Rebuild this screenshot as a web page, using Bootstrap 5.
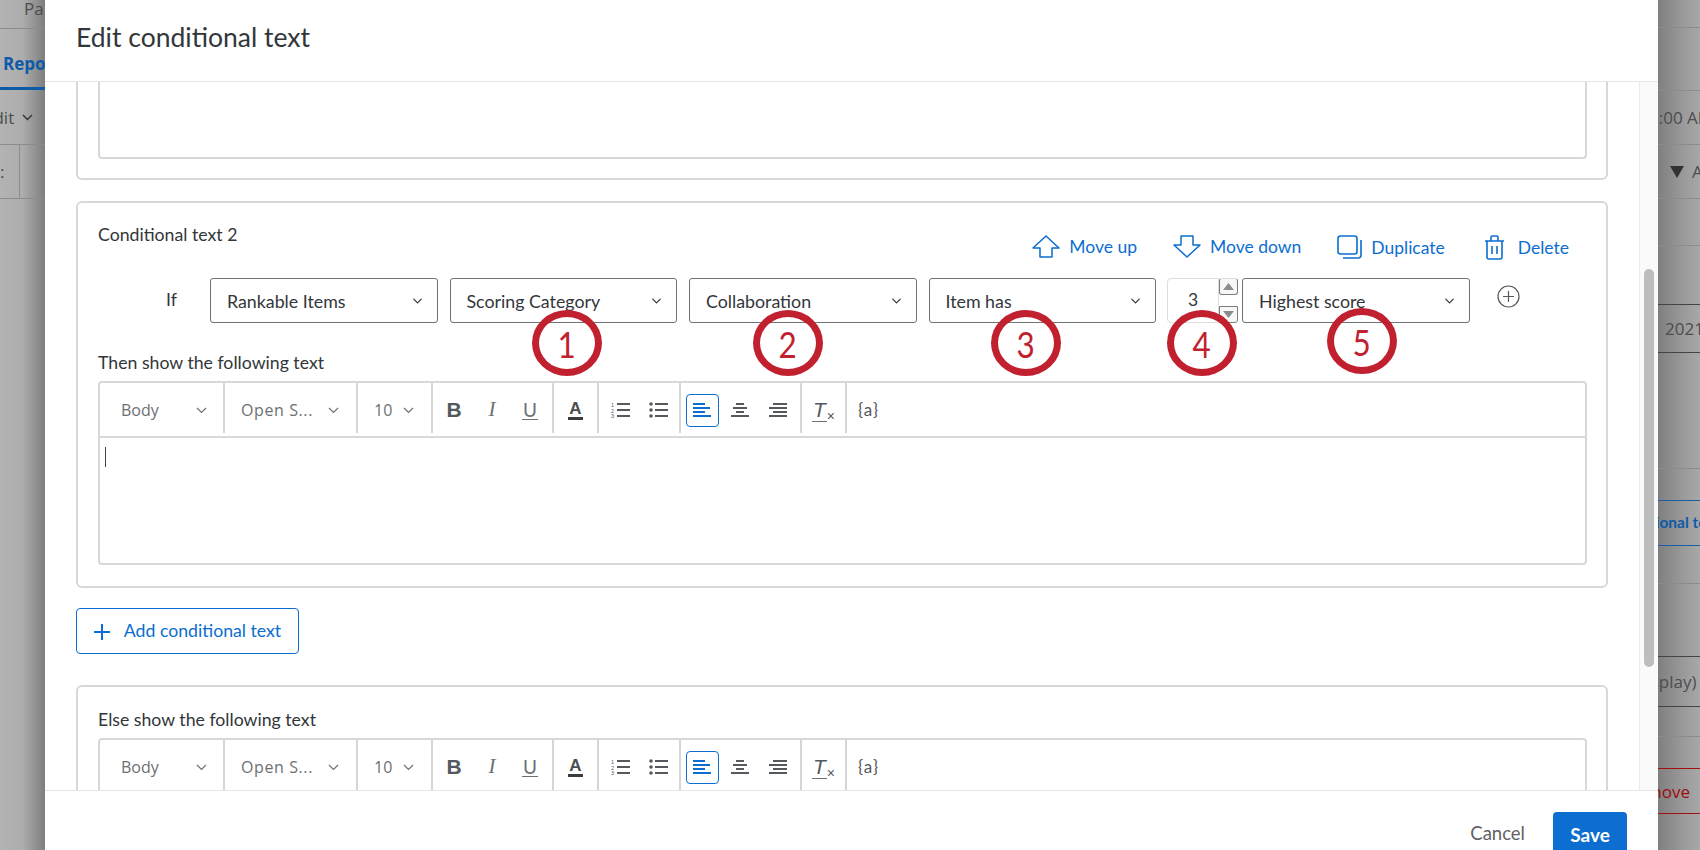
<!DOCTYPE html>
<html lang="en">
<head>
<meta charset="utf-8">
<title>Edit conditional text</title>
<link href="https://cdn.jsdelivr.net/npm/bootstrap@5.3.0/dist/css/bootstrap.min.css" rel="stylesheet">
<style>
html,body{height:850px;overflow:hidden;}
body{background:#a3a3a3;color:#32363a;font-family:"Lato","Liberation Sans",sans-serif;font-size:17.7px;position:relative;}
/* backdrop page */
.bg-wrap{height:850px;}
.bg-left,.bg-right{overflow:hidden;white-space:nowrap;color:#4b4d4f;font-family:"Open Sans",sans-serif;font-size:17px;}
.bg-left{width:45px;background:linear-gradient(90deg,#b3b3b3 0,#adadad 50%,#7e7e7e 100%);}
.bg-right{width:42px;background:linear-gradient(90deg,#7f7f7f 0,#9a9a9a 60%,#a8a8a8 100%);}
.bg-row{border-bottom:1px solid #8c8c8c;overflow:hidden;line-height:1;flex:none;}
.r-h28{height:29px;}.r-h58{height:61px;}.r-h54{height:55px;}.r-h53{height:54px;}.r-rest{flex:1;border:0;}
.bg-tab{color:#0d5ba8;font-weight:700;padding:10px 0 0 3px;border-bottom:3px solid #0d5ba8;font-size:17px;}
.bg-edit{margin-left:-16px;}
.bg-cellline{width:20px;height:100%;border-right:1px solid #8c8c8c;flex:none;}
.rr-1{height:28px;}.rr-2{height:63px;}.rr-3{height:54px;}.rr-5{height:47px;}.rr-6{height:59px;border-bottom-color:#444;}.rr-7{height:48px;border-bottom-color:#444;}
.rr-8{height:116px;}.rr-9{height:32px;border-bottom-color:#1a5da5;}.rr-10{height:45px;border-bottom-color:#1a5da5;color:#0d5ba8;font-weight:700;font-family:"Lato",sans-serif;font-size:15.500px;}
.rr-11{height:38px;}.rr-12{height:73px;border-bottom-color:#444;}.rr-13{height:50px;border-bottom-color:#444;}.rr-14{height:30px;}.rr-15{height:32px;border-bottom-color:#a01010;}.rr-16{height:45px;border-bottom-color:#a01010;color:#9c0d0d;}
.tx-clip{display:block;}
.tx-time{margin-left:-9px;}.tx-year{margin-left:7px;}.tx-cond{margin-left:-49px;}.tx-play{margin-left:-27px;}.tx-move{margin-left:-32px;}
.tri{width:0;height:0;border-left:7px solid transparent;border-right:7px solid transparent;border-top:12px solid #333;margin-left:12px;flex:none;}
/* modal */
.edit-modal{position:absolute;left:45px;top:0;width:1613px;height:850px;border:0;border-radius:0;box-shadow:none;background:#fff;}
.edit-head{height:82px;flex:none;padding:0 31px;border-bottom:1px solid #e6e6e6;border-radius:0;}
.edit-head .modal-title{font-size:26.5px;font-weight:400;color:#32363a;line-height:1;margin-top:-6px;}
.edit-main{min-height:0;padding:0;}
.scroll-col{flex:1;min-width:0;padding:0 31px;overflow:hidden;}
.scroll-track{width:19px;background:#fafafa;border-left:1px solid #ececec;padding:187px 0 0 4px;}
.scroll-thumb{width:10px;height:398px;background:#bdbdbd;border-radius:5px;}
.sect{border:2px solid #d8d8d8;border-radius:6px;padding:0 19px 0 20px;flex:none;}
.sect-1{height:98px;border-top:0;border-radius:0 0 6px 6px;margin-bottom:21px;}
.sect-2{height:387px;}
.sect-3{height:200px;padding-top:23px;margin-top:31px;}
.box-top{height:77px;border:2px solid #d8d8d8;border-top:0;border-radius:0 0 4px 4px;}
.sect-head{height:75px;}
.sect-title{font-size:17.7px;line-height:20px;padding-top:22px;}
.acts{padding:32px 18px 0 0;gap:36px;}
.act{color:#0b6ed0;font-size:17.5px;line-height:23px;gap:9px;text-decoration:none;}
.act-del{margin-left:3px;}
.cond-row{height:45px;gap:12px;}
.if-cell{width:100px;padding-left:68px;font-size:17.7px;}
select.cond-sel{width:227.5px;height:45px;flex:none;padding:1px 30px 0 16px;border:1px solid #6f7276;border-radius:3px;color:#32363a;font-family:"Lato",sans-serif;font-size:17.8px;background-position:right 13px center;background-size:13px 10px;}
.num-wrap{width:71px;height:45px;flex:none;margin:0 -8px 0 -1px;}
.num-inp{width:52px;height:45px;border:1px solid #ddd;border-radius:4px 0 0 4px;text-align:center;font-size:17.5px;color:#32363a;}
.spin{width:19px;height:17px;border:1px solid #7a7d80;border-top-color:#ddd;background:#f7f7f7;}
.spin-up{border-radius:3px;}
.spin-dn{border-radius:0 0 3px 3px;border-top:1px solid #7a7d80;}
.spin-gap{height:11px;}
.add-circ{margin-left:15px;margin-top:-8px;flex:none;}
.lab{font-size:17.7px;line-height:20px;margin:30px 0 8px;}
.lab-3{margin:0 0 8px;}
.editor{border:2px solid #d8d8d8;border-radius:4px;height:184px;flex:none;}
.tb{height:55px;border-bottom:2px solid #d8d8d8;}
.tg{height:50px;border-right:2px solid #d6d6d6;font-family:"Open Sans",sans-serif;font-size:16px;color:#6d7073;}
.tg-in{margin-top:5px;}
.g1{width:125px;padding:0 16px 0 21px;}
.g2{width:133px;padding:0 17px 0 16px;letter-spacing:.6px;}
.g3{width:75px;padding:0 17px 0 16px;}
.g4{width:121px;padding-left:2px;}
.g5{width:45px;}
.g6{width:82px;padding-left:2px;}
.g7{width:121px;padding-left:2px;}
.g8{width:45px;}
.g9{padding-left:11px;font-size:17px;letter-spacing:1.2px;color:#55585c;height:50px;}
.tg > *, .g9{position:relative;top:2px;}
.ic{width:38px;height:32px;}
.ic-b{font-family:"Liberation Sans",sans-serif;font-weight:700;font-size:21px;color:#55585c;}
.ic-i{font-family:"Liberation Serif",serif;font-style:italic;font-size:21px;color:#6d7073;}
.ic-u{font-family:"Lato",sans-serif;font-size:19px;color:#6d7073;}
.ic-u span{border-bottom:1.5px solid #6d7073;line-height:19px;display:block;padding:0 1px;}
.ic-a{font-family:"Liberation Sans",sans-serif;font-weight:700;font-size:17px;color:#4b4e51;}
.ic-a span{border-bottom:3px solid #3a3d40;line-height:17px;display:block;padding:0 1px;}
.ic-on{border:1.5px solid #0b6ed0;border-radius:4px;width:33px;height:33px;margin:0 2.5px;}
.tx-t{font-family:"Liberation Sans",sans-serif;font-style:italic;font-size:21px;color:#55585c;border-bottom:1.5px solid #6d7073;line-height:22px;display:block;padding:0 1px;}
.tx-x{font-family:"Liberation Sans",sans-serif;font-size:14px;color:#55585c;margin-top:11px;line-height:1;}
.caret-blink{width:1px;height:20px;background:#444;margin:9px 0 0 5px;}
.btn-add{width:223px;height:46px;padding:1px 0 0;margin-top:20px;flex:none;border:1px solid #0b6ed0;color:#0b6ed0;font-size:17.7px;gap:14px;border-radius:4px;background:#fff;}
.edit-foot{height:60px;flex:none;padding:21px 31px 0 0;border-top:1px solid #e6e6e6;align-items:flex-start;overflow:hidden;gap:28px;border-radius:0;flex-wrap:nowrap;}
.link-cancel{color:#5f6266;font-size:18.5px;margin:9px 0 0;line-height:24px;}
.btn-save{width:74px;height:46px;background:#0b6ed0;border:0;border-radius:4px;color:#fff;font-size:19px;font-weight:700;margin:0;padding:0;}
/* annotations */
.mark-c{position:absolute;width:70px;height:66px;border:7px solid #c1202f;border-radius:50%;color:#c1202f;font-family:"Lato",sans-serif;font-size:37px;line-height:1;}
.mark-c span{display:block;transform:scaleX(.85);}
.c1{left:532px;top:310px;}.c2{left:753px;top:310px;}.c3{left:991px;top:310px;}.c4{left:1167px;top:310px;}.c5{left:1327px;top:308px;}
</style>
</head>
<body>
<div class="bg-wrap d-flex justify-content-between">
  <div class="bg-left d-flex flex-column">
    <div class="bg-row r-h28 ps-4">Pa</div>
    <div class="bg-row r-h58 bg-tab d-flex align-items-center">Repo</div>
    <div class="bg-row r-h54 d-flex align-items-center gap-2"><span class="bg-edit">Edit</span>
      <svg width="11" height="7" viewBox="0 0 11 7"><path d="M1 1l4.500 4.500L10 1" fill="none" stroke="#333" stroke-width="1.400"/></svg></div>
    <div class="bg-row r-h53 d-flex align-items-center"><div class="bg-cellline d-flex align-items-center">:</div><span class="ms-4">1</span></div>
    <div class="r-rest"></div>
  </div>
  <div class="bg-right d-flex flex-column">
    <div class="bg-row rr-1"></div>
    <div class="bg-row rr-2"></div>
    <div class="bg-row rr-3 d-flex align-items-center"><span class="tx-clip tx-time">5:00 AM</span></div>
    <div class="bg-row rr-3 d-flex align-items-center"><div class="tri"></div><span class="ms-2">A</span></div>
    <div class="bg-row rr-5"></div>
    <div class="bg-row rr-6"></div>
    <div class="bg-row rr-7 d-flex align-items-center"><span class="tx-clip tx-year">2021</span></div>
    <div class="bg-row rr-8"></div>
    <div class="bg-row rr-9"></div>
    <div class="bg-row rr-10 d-flex align-items-center"><span class="tx-clip tx-cond">Conditional text</span></div>
    <div class="bg-row rr-11"></div>
    <div class="bg-row rr-12"></div>
    <div class="bg-row rr-13 d-flex align-items-center"><span class="tx-clip tx-play">(display)</span></div>
    <div class="bg-row rr-14"></div>
    <div class="bg-row rr-15"></div>
    <div class="bg-row rr-16 d-flex align-items-center"><span class="tx-clip tx-move">Remove</span></div>
    <div class="r-rest"></div>
  </div>
</div>

<div class="modal-content edit-modal d-flex flex-column">
  <div class="modal-header edit-head"><h5 class="modal-title">Edit conditional text</h5></div>
  <div class="modal-body edit-main d-flex flex-fill overflow-hidden">
    <div class="scroll-col d-flex flex-column">
      <div class="sect sect-1"><div class="box-top"></div></div>

      <div class="sect sect-2">
        <div class="sect-head d-flex justify-content-between">
          <div class="sect-title">Conditional text 2</div>
          <div class="acts d-flex align-items-start">
            <a class="act d-flex align-items-center" href="#"><svg width="28" height="23" viewBox="0 0 28 23"><path d="M14 1L27 13H20V22H8V13H1Z" fill="none" stroke="#0b6ed0" stroke-width="1.500" stroke-linejoin="round"/></svg>Move up</a>
            <a class="act d-flex align-items-center" href="#"><svg width="28" height="23" viewBox="0 0 28 23"><path d="M14 22L27 10H20V1H8V10H1Z" fill="none" stroke="#0b6ed0" stroke-width="1.500" stroke-linejoin="round"/></svg>Move down</a>
            <a class="act d-flex align-items-center" href="#"><svg width="25" height="24" viewBox="0 0 25 24"><rect x="1" y="1" width="19" height="18" rx="2.500" fill="none" stroke="#0b6ed0" stroke-width="1.600"/><path d="M24 5v15a3 3 0 0 1-3 3H6" fill="none" stroke="#0b6ed0" stroke-width="1.600"/></svg>Duplicate</a>
            <a class="act act-del d-flex align-items-center" href="#"><svg class="me-1" width="21" height="25" viewBox="0 0 21 25"><path d="M1 6h19M7 6V2.500A1.500 1.500 0 0 1 8.500 1h4A1.500 1.500 0 0 1 14 2.500V6M3 6v16a2 2 0 0 0 2 2h11a2 2 0 0 0 2-2V6M8 11v8M13 11v8" fill="none" stroke="#0b6ed0" stroke-width="1.600"/></svg>Delete</a>
          </div>
        </div>
        <div class="cond-row d-flex align-items-center">
          <div class="if-cell flex-none">If</div>
          <select class="form-select cond-sel"><option>Rankable Items</option></select>
          <select class="form-select cond-sel"><option>Scoring Category</option></select>
          <select class="form-select cond-sel"><option>Collaboration</option></select>
          <select class="form-select cond-sel"><option>Item has</option></select>
          <div class="num-wrap d-flex">
            <div class="num-inp d-flex align-items-center justify-content-center">3</div>
            <div class="d-flex flex-column">
              <div class="spin spin-up d-flex align-items-center justify-content-center"><svg width="11" height="7" viewBox="0 0 11 7"><path d="M5.500 0L11 7H0Z" fill="#8a8d90"/></svg></div>
              <div class="spin-gap"></div>
              <div class="spin spin-dn d-flex align-items-center justify-content-center"><svg width="11" height="7" viewBox="0 0 11 7"><path d="M5.500 7L11 0H0Z" fill="#8a8d90"/></svg></div>
            </div>
          </div>
          <select class="form-select cond-sel"><option>Highest score</option></select>
          <svg class="add-circ" width="23" height="23" viewBox="0 0 23 23"><circle cx="11.500" cy="11.500" r="10.500" fill="none" stroke="#55585c" stroke-width="1.200"/><path d="M11.500 6v11M6 11.500h11" stroke="#55585c" stroke-width="1.200"/></svg>
        </div>
        <div class="lab">Then show the following text</div>
        <div class="editor">
          <div class="tb d-flex">
            <div class="tg g1 d-flex align-items-center justify-content-between"><span>Body</span><svg width="11" height="7" viewBox="0 0 11 7"><path d="M1 1l4.500 4.500L10 1" fill="none" stroke="#6d7073" stroke-width="1.200"/></svg></div>
            <div class="tg g2 d-flex align-items-center justify-content-between"><span>Open S...</span><svg width="11" height="7" viewBox="0 0 11 7"><path d="M1 1l4.500 4.500L10 1" fill="none" stroke="#6d7073" stroke-width="1.200"/></svg></div>
            <div class="tg g3 d-flex align-items-center justify-content-between"><span>10</span><svg width="11" height="7" viewBox="0 0 11 7"><path d="M1 1l4.500 4.500L10 1" fill="none" stroke="#6d7073" stroke-width="1.200"/></svg></div>
            <div class="tg g4 d-flex align-items-center">
              <div class="ic ic-b d-flex align-items-center justify-content-center">B</div>
              <div class="ic ic-i d-flex align-items-center justify-content-center">I</div>
              <div class="ic ic-u d-flex align-items-center justify-content-center"><span>U</span></div>
            </div>
            <div class="tg g5 d-flex align-items-center justify-content-center ic-a"><span>A</span></div>
            <div class="tg g6 d-flex align-items-center">
              <div class="ic d-flex align-items-center justify-content-center"><svg width="19" height="16" viewBox="0 0 19 16"><text x="0" y="5" font-size="5.500" font-family="Liberation Sans" fill="#55585c">1</text><text x="0" y="10.500" font-size="5.500" font-family="Liberation Sans" fill="#55585c">2</text><text x="0" y="16" font-size="5.500" font-family="Liberation Sans" fill="#55585c">3</text><path d="M6 2h13M6 8h13M6 14h13" stroke="#55585c" stroke-width="2"/></svg></div>
              <div class="ic d-flex align-items-center justify-content-center"><svg width="19" height="16" viewBox="0 0 19 16"><circle cx="2" cy="2" r="1.800" fill="#55585c"/><circle cx="2" cy="8" r="1.800" fill="#55585c"/><circle cx="2" cy="14" r="1.800" fill="#55585c"/><path d="M6 2h13M6 8h13M6 14h13" stroke="#55585c" stroke-width="2"/></svg></div>
            </div>
            <div class="tg g7 d-flex align-items-center">
              <div class="ic ic-on d-flex align-items-center justify-content-center"><svg width="18" height="14" viewBox="0 0 18 14"><path d="M0 1h12M0 5h17M0 9h12M0 13h18" stroke="#0b6ed0" stroke-width="2"/></svg></div>
              <div class="ic d-flex align-items-center justify-content-center"><svg width="18" height="14" viewBox="0 0 18 14"><path d="M5 1h8M2 5h14M5 9h8M0 13h18" stroke="#55585c" stroke-width="2"/></svg></div>
              <div class="ic d-flex align-items-center justify-content-center"><svg width="18" height="14" viewBox="0 0 18 14"><path d="M4 1h14M0 5h18M4 9h14M0 13h18" stroke="#55585c" stroke-width="2"/></svg></div>
            </div>
            <div class="tg g8 d-flex align-items-center justify-content-center"><span class="tx-t">T</span><span class="tx-x">×</span></div>
            <div class="g9 d-flex align-items-center">{a}</div>
          </div>
          <div class="caret-blink"></div>
        </div>
      </div>

      <button class="btn btn-add d-flex align-items-center justify-content-center" type="button"><svg width="16" height="16" viewBox="0 0 16 16"><path d="M8 0v16M0 8h16" stroke="#0b6ed0" stroke-width="2"/></svg>Add conditional text</button>

      <div class="sect sect-3">
        <div class="lab lab-3">Else show the following text</div>
        <div class="editor">
          <div class="tb d-flex">
            <div class="tg g1 d-flex align-items-center justify-content-between"><span>Body</span><svg width="11" height="7" viewBox="0 0 11 7"><path d="M1 1l4.500 4.500L10 1" fill="none" stroke="#6d7073" stroke-width="1.200"/></svg></div>
            <div class="tg g2 d-flex align-items-center justify-content-between"><span>Open S...</span><svg width="11" height="7" viewBox="0 0 11 7"><path d="M1 1l4.500 4.500L10 1" fill="none" stroke="#6d7073" stroke-width="1.200"/></svg></div>
            <div class="tg g3 d-flex align-items-center justify-content-between"><span>10</span><svg width="11" height="7" viewBox="0 0 11 7"><path d="M1 1l4.500 4.500L10 1" fill="none" stroke="#6d7073" stroke-width="1.200"/></svg></div>
            <div class="tg g4 d-flex align-items-center">
              <div class="ic ic-b d-flex align-items-center justify-content-center">B</div>
              <div class="ic ic-i d-flex align-items-center justify-content-center">I</div>
              <div class="ic ic-u d-flex align-items-center justify-content-center"><span>U</span></div>
            </div>
            <div class="tg g5 d-flex align-items-center justify-content-center ic-a"><span>A</span></div>
            <div class="tg g6 d-flex align-items-center">
              <div class="ic d-flex align-items-center justify-content-center"><svg width="19" height="16" viewBox="0 0 19 16"><text x="0" y="5" font-size="5.500" font-family="Liberation Sans" fill="#55585c">1</text><text x="0" y="10.500" font-size="5.500" font-family="Liberation Sans" fill="#55585c">2</text><text x="0" y="16" font-size="5.500" font-family="Liberation Sans" fill="#55585c">3</text><path d="M6 2h13M6 8h13M6 14h13" stroke="#55585c" stroke-width="2"/></svg></div>
              <div class="ic d-flex align-items-center justify-content-center"><svg width="19" height="16" viewBox="0 0 19 16"><circle cx="2" cy="2" r="1.800" fill="#55585c"/><circle cx="2" cy="8" r="1.800" fill="#55585c"/><circle cx="2" cy="14" r="1.800" fill="#55585c"/><path d="M6 2h13M6 8h13M6 14h13" stroke="#55585c" stroke-width="2"/></svg></div>
            </div>
            <div class="tg g7 d-flex align-items-center">
              <div class="ic ic-on d-flex align-items-center justify-content-center"><svg width="18" height="14" viewBox="0 0 18 14"><path d="M0 1h12M0 5h17M0 9h12M0 13h18" stroke="#0b6ed0" stroke-width="2"/></svg></div>
              <div class="ic d-flex align-items-center justify-content-center"><svg width="18" height="14" viewBox="0 0 18 14"><path d="M5 1h8M2 5h14M5 9h8M0 13h18" stroke="#55585c" stroke-width="2"/></svg></div>
              <div class="ic d-flex align-items-center justify-content-center"><svg width="18" height="14" viewBox="0 0 18 14"><path d="M4 1h14M0 5h18M4 9h14M0 13h18" stroke="#55585c" stroke-width="2"/></svg></div>
            </div>
            <div class="tg g8 d-flex align-items-center justify-content-center"><span class="tx-t">T</span><span class="tx-x">×</span></div>
            <div class="g9 d-flex align-items-center">{a}</div>
          </div>
        </div>
      </div>
    </div>
    <div class="scroll-track flex-none"><div class="scroll-thumb"></div></div>
  </div>
  <div class="modal-footer edit-foot justify-content-end">
    <p class="link-cancel">Cancel</p>
    <button class="btn btn-primary btn-save" type="button">Save</button>
  </div>
</div>

<div class="mark-c c1 d-flex align-items-center justify-content-center"><span>1</span></div>
<div class="mark-c c2 d-flex align-items-center justify-content-center"><span>2</span></div>
<div class="mark-c c3 d-flex align-items-center justify-content-center"><span>3</span></div>
<div class="mark-c c4 d-flex align-items-center justify-content-center"><span>4</span></div>
<div class="mark-c c5 d-flex align-items-center justify-content-center"><span>5</span></div>
<script src="https://cdn.jsdelivr.net/npm/bootstrap@5.3.0/dist/js/bootstrap.bundle.min.js"></script>
</body>
</html>
